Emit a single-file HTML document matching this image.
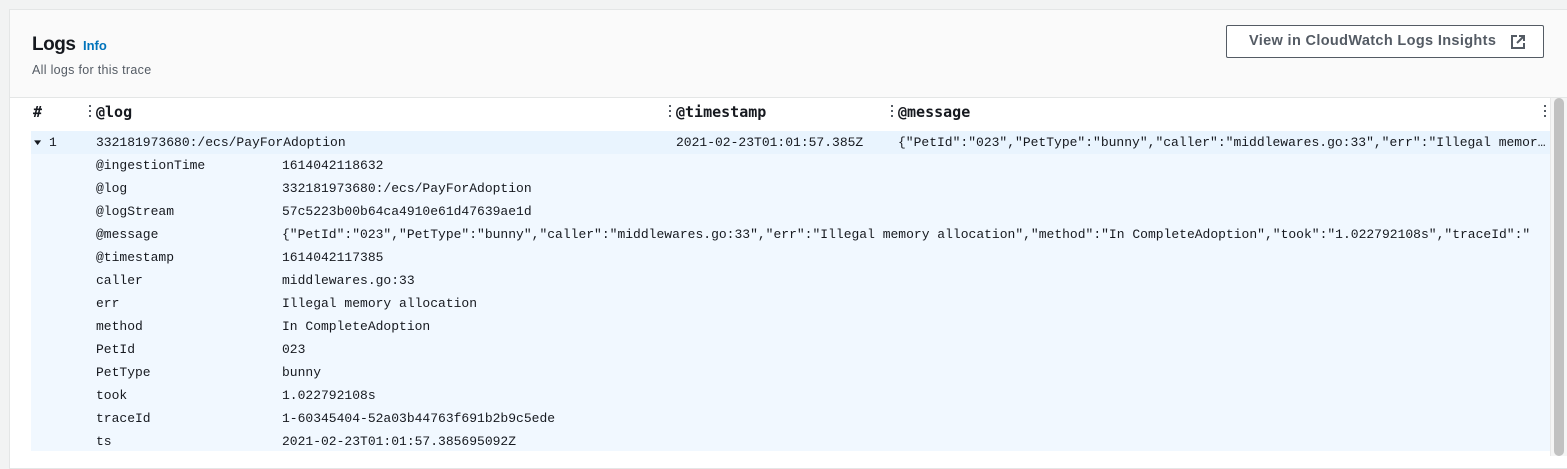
<!DOCTYPE html>
<html><head><meta charset="utf-8"><style>
*{margin:0;padding:0;box-sizing:border-box}
body{width:1567px;height:456px;background:#f2f3f3;overflow:hidden;font-family:"Liberation Sans",sans-serif;position:relative}
.card{position:absolute;left:9px;top:9px;width:1560px;height:460px;background:#fff;border:1px solid #e4e6e6;border-right:none}
.hdr{position:absolute;left:0;top:0;right:0;height:88px;background:#fafafa;border-bottom:1px solid #e4e6e6}
.t{position:absolute;left:22px;top:24px;font-size:19px;font-weight:bold;color:#16191f;letter-spacing:-0.5px}
.info{position:absolute;left:73px;top:28px;font-size:13px;font-weight:bold;color:#0073bb}
.sub{position:absolute;left:22px;top:53px;font-size:12.5px;color:#545b64;letter-spacing:0.3px}
.btn{position:absolute;left:1216px;top:15px;width:318px;height:33px;border:1px solid #545b64;border-radius:2px;background:#fff;font-size:14.5px;font-weight:bold;color:#545b64;line-height:31px;padding-left:22px;letter-spacing:0.35px}
.btn svg{position:absolute;left:284px;top:9px}
.mono{font-family:"Liberation Mono",monospace;font-size:13px;color:#16191f}
.th{position:absolute;top:103px;font-family:"DejaVu Sans Mono","Liberation Mono",monospace;font-weight:bold;font-size:15px;color:#16191f}
.dots{position:absolute;top:105px;width:3px;height:12px;font-size:0}
.dots i{display:block;width:2px;height:2px;background:#545b64;margin-bottom:3px}
.hl{position:absolute;left:31px;top:131px;width:1519px;height:320px;background:#f1f8ff}
.hl1{position:absolute;left:31px;top:131px;width:1519px;height:23px;background:#e9f4fe}
.r{position:absolute;white-space:nowrap}
.sb{position:absolute;left:1550px;top:98px;width:17px;height:358px;background:#f5f5f5;border-left:1px solid #e8e8e8}
.sb i{position:absolute;left:3px;top:0;width:10px;height:358px;background:#c1c1c1;border-radius:5px}
</style></head><body>
<div class="card">
<div class="hdr">
<div class="t">Logs</div><div class="info">Info</div>
<div class="sub">All logs for this trace</div>
<div class="btn">View in CloudWatch Logs Insights<svg width="14" height="14" viewBox="0 0 14 14" fill="none" stroke="#545b64" stroke-width="2"><path d="M6 1H1v12h12V8"/><path d="M8 1h5v5M13 1L6 8"/></svg></div>
</div>
</div>
<div class="th" style="left:33px">#</div>
<div class="dots" style="left:89px"><i></i><i></i><i></i></div><div class="th" style="left:96px">@log</div>
<div class="dots" style="left:669px"><i></i><i></i><i></i></div><div class="th" style="left:676px">@timestamp</div>
<div class="dots" style="left:891px"><i></i><i></i><i></i></div><div class="th" style="left:898px">@message</div>
<div class="dots" style="left:1544px"><i></i><i></i><i></i></div>
<div class="hl"></div><div class="hl1"></div>
<div class="mono">
<div class="r" style="left:34px;top:135px"><span style="font-size:12px;display:inline-block;transform:scaleY(0.7)">&#9660;</span> 1</div>
<div class="r" style="left:96px;top:135px">332181973680:/ecs/PayForAdoption</div>
<div class="r" style="left:676px;top:135px">2021-02-23T01:01:57.385Z</div>
<div class="r" style="left:898px;top:135px;width:650px;overflow:hidden;text-overflow:ellipsis">{"PetId":"023","PetType":"bunny","caller":"middlewares.go:33","err":"Illegal memory allocation"}</div>
<div class="r" style="left:96px;top:158px">@ingestionTime</div><div class="r" style="left:282px;top:158px">1614042118632</div>
<div class="r" style="left:96px;top:181px">@log</div><div class="r" style="left:282px;top:181px">332181973680:/ecs/PayForAdoption</div>
<div class="r" style="left:96px;top:204px">@logStream</div><div class="r" style="left:282px;top:204px">57c5223b00b64ca4910e61d47639ae1d</div>
<div class="r" style="left:96px;top:227px">@message</div><div class="r" style="left:282px;top:227px;width:1266px;overflow:hidden">{"PetId":"023","PetType":"bunny","caller":"middlewares.go:33","err":"Illegal memory allocation","method":"In CompleteAdoption","took":"1.022792108s","traceId":"</div>
<div class="r" style="left:96px;top:250px">@timestamp</div><div class="r" style="left:282px;top:250px">1614042117385</div>
<div class="r" style="left:96px;top:273px">caller</div><div class="r" style="left:282px;top:273px">middlewares.go:33</div>
<div class="r" style="left:96px;top:296px">err</div><div class="r" style="left:282px;top:296px">Illegal memory allocation</div>
<div class="r" style="left:96px;top:319px">method</div><div class="r" style="left:282px;top:319px">In CompleteAdoption</div>
<div class="r" style="left:96px;top:342px">PetId</div><div class="r" style="left:282px;top:342px">023</div>
<div class="r" style="left:96px;top:365px">PetType</div><div class="r" style="left:282px;top:365px">bunny</div>
<div class="r" style="left:96px;top:388px">took</div><div class="r" style="left:282px;top:388px">1.022792108s</div>
<div class="r" style="left:96px;top:411px">traceId</div><div class="r" style="left:282px;top:411px">1-60345404-52a03b44763f691b2b9c5ede</div>
<div class="r" style="left:96px;top:434px">ts</div><div class="r" style="left:282px;top:434px">2021-02-23T01:01:57.385695092Z</div>
</div>
<div class="sb"><i></i></div>
</body></html>
